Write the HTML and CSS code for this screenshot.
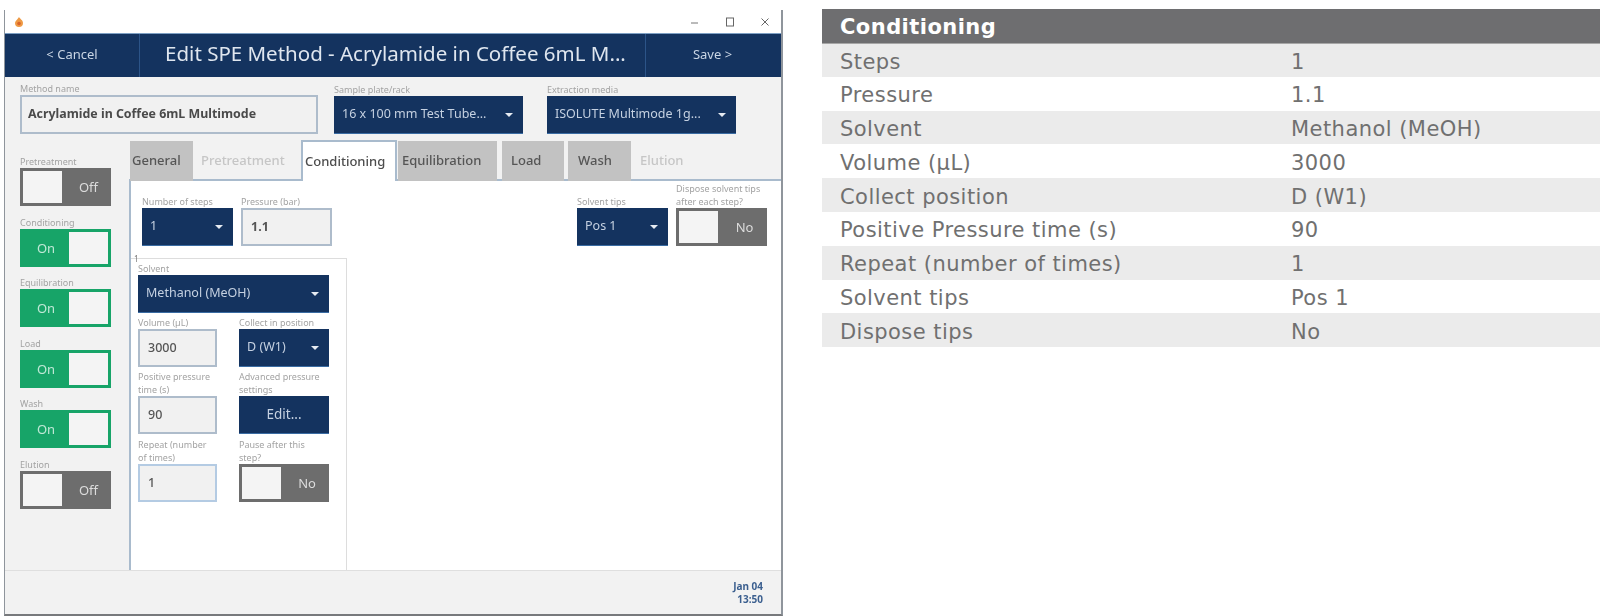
FILE: index.html
```html
<!DOCTYPE html>
<html lang="en">
<head>
<meta charset="utf-8">
<title>Edit SPE Method</title>
<link rel="stylesheet" href="styles.css">
</head>
<body>
<main class="page">
  <section class="window">
    <div class="titlebar">
      <svg class="app-icon" viewBox="0 0 12 12" width="12" height="12"><path d="M6 1 C7 3 10 4 10 7 A4 4 0 0 1 2 7 C2 5 4 4 6 1Z" fill="#ee9a45"/><circle cx="6" cy="7.5" r="1.8" fill="#d9642a"/></svg>
      <div class="controls">
        <svg viewBox="0 0 10 10" width="10" height="10"><path d="M1 6H8" stroke="#777" stroke-width="1"/></svg>
        <svg viewBox="0 0 10 10" width="10" height="10"><rect x="1.5" y="1" width="7" height="8" fill="none" stroke="#666" stroke-width="1"/></svg>
        <svg viewBox="0 0 10 10" width="10" height="10"><path d="M1.5 1.5L8.5 8.5M8.5 1.5L1.5 8.5" stroke="#666" stroke-width="1"/></svg>
      </div>
    </div>
    <header class="appbar">
      <div class="bar-btn left">&lt; Cancel</div>
      <h1 class="bar-title">Edit SPE Method - Acrylamide in Coffee 6mL M...</h1>
      <div class="bar-btn right">Save &gt;</div>
    </header>
    <div class="top-fields">
      <div class="field w-name"><label class="lbl">Method name</label><div class="input bold big">Acrylamide in Coffee 6mL Multimode</div></div>
      <div class="field w-plate"><label class="lbl">Sample plate/rack</label><div class="select">16 x 100 mm Test Tube...<i class="caret"></i></div></div>
      <div class="field w-plate"><label class="lbl">Extraction media</label><div class="select">ISOLUTE Multimode 1g...<i class="caret"></i></div></div>
    </div>
    <div class="main">
      <aside class="sidebar">
        <div class="field"><label class="lbl">Pretreatment</label><div class="toggle off"><span class="knob"></span><span class="tlabel">Off</span></div></div>
        <div class="field"><label class="lbl">Conditioning</label><div class="toggle on"><span class="tlabel">On</span><span class="knob"></span></div></div>
        <div class="field"><label class="lbl">Equilibration</label><div class="toggle on"><span class="tlabel">On</span><span class="knob"></span></div></div>
        <div class="field"><label class="lbl">Load</label><div class="toggle on"><span class="tlabel">On</span><span class="knob"></span></div></div>
        <div class="field"><label class="lbl">Wash</label><div class="toggle on"><span class="tlabel">On</span><span class="knob"></span></div></div>
        <div class="field"><label class="lbl">Elution</label><div class="toggle off"><span class="knob"></span><span class="tlabel">Off</span></div></div>
      </aside>
      <div class="tabarea">
        <nav class="tabs">
          <span class="tab gray t-general">General</span>
          <span class="tab dis t-pre">Pretreatment</span>
          <span class="tab active t-cond">Conditioning</span>
          <span class="tab gray t-equi">Equilibration</span>
          <span class="tab gray t-load">Load</span>
          <span class="tab gray t-wash">Wash</span>
          <span class="tab dis t-elu">Elution</span>
        </nav>
        <div class="panel">
          <div class="panel-top">
            <div class="field w-91"><label class="lbl">Number of steps</label><div class="select">1<i class="caret"></i></div></div>
            <div class="field w-91"><label class="lbl">Pressure (bar)</label><div class="input bold">1.1</div></div>
            <div class="field w-91 push"><label class="lbl">Solvent tips</label><div class="select">Pos 1<i class="caret"></i></div></div>
            <div class="field w-91"><label class="lbl">Dispose solvent tips after each step?</label><div class="toggle off"><span class="knob"></span><span class="tlabel">No</span></div></div>
          </div>
          <div class="step">
            <span class="step-no">1</span>
            <div class="field"><label class="lbl">Solvent</label><div class="select">Methanol (MeOH)<i class="caret"></i></div></div>
            <div class="step-grid">
              <div class="field"><label class="lbl">Volume (µL)</label><div class="input">3000</div></div>
              <div class="field"><label class="lbl">Collect in position</label><div class="select">D (W1)<i class="caret"></i></div></div>
              <div class="field"><label class="lbl">Positive pressure time (s)</label><div class="input">90</div></div>
              <div class="field"><label class="lbl">Advanced pressure settings</label><div class="select center">Edit...</div></div>
              <div class="field"><label class="lbl">Repeat (number of times)</label><div class="input focus">1</div></div>
              <div class="field"><label class="lbl">Pause after this step?</label><div class="toggle off"><span class="knob"></span><span class="tlabel">No</span></div></div>
            </div>
          </div>
        </div>
      </div>
    </div>
    <footer class="statusbar"><div class="clock">Jan 04<br>13:50</div></footer>
  </section>
  <table class="spec">
    <colgroup><col class="col-key"><col></colgroup>
    <thead><tr><th colspan="2">Conditioning</th></tr></thead>
    <tbody>
      <tr><td>Steps</td><td>1</td></tr>
      <tr><td>Pressure</td><td>1.1</td></tr>
      <tr><td>Solvent</td><td>Methanol (MeOH)</td></tr>
      <tr><td>Volume (µL)</td><td>3000</td></tr>
      <tr><td>Collect position</td><td>D (W1)</td></tr>
      <tr><td>Positive Pressure time (s)</td><td>90</td></tr>
      <tr><td>Repeat (number of times)</td><td>1</td></tr>
      <tr><td>Solvent tips</td><td>Pos 1</td></tr>
      <tr><td>Dispose tips</td><td>No</td></tr>
    </tbody>
  </table>
</main>
</body>
</html>
```
FILE: styles.css
```css
* { box-sizing: border-box; }
html, body { margin: 0; padding: 0; background: #fff; }
body { width: 1600px; height: 616px; overflow: hidden; }
.page { display: flex; align-items: flex-start; }

/* window */
.window {
  width: 779px; height: 606px; margin: 10px 0 0 4px;
  border-left: 1px solid #8f959c; border-right: 2px solid #8f959c; border-bottom: 2px solid #77797c;
  font-family: "Noto Sans", sans-serif; color: #444;
  display: flex; flex-direction: column; background: #f2f2f2;
  filter: blur(0.7px);
}
.titlebar { height: 23px; flex: none; background: #fff; display: flex; align-items: center; justify-content: space-between; padding: 0 11px 0 8px; }
.controls { display: flex; gap: 25px; }
.appbar { height: 44px; flex: none; background: #14335f; color: #dfe6ef; display: flex; align-items: center; border-top: 1px solid #7ea0c4; }
.bar-btn { font-size: 13px; text-align: center; flex: none; height: 100%; line-height: 40px; color: #c9d5e4; }
.bar-btn.left { width: 135px; border-right: 1px solid #2c5488; }
.bar-btn.right { width: 136px; border-left: 1px solid #2c5488; padding-right: 2px; }
.bar-title { flex: 1; min-width: 0; margin: 0; padding: 0 0 5px 6px; font-weight: 400; font-size: 20.5px; text-align: center; white-space: nowrap; }

.field { display: flex; flex-direction: column; justify-content: flex-end; }
.lbl { font-size: 9px; line-height: 13px; color: #a3a3a3; display: block; }
.top-fields { display: flex; height: 58px; flex: none; padding: 0 0 1px 15px; align-items: flex-end; }
.w-name { width: 298px; margin-right: 16px; }
.w-plate { width: 189px; margin-right: 24px; }

.input { height: 38px; background: #f1f1f1; border: 2px solid #aebccb; padding-left: 8px; line-height: 33px; font-size: 12.5px; font-weight: 500; color: #555; white-space: nowrap; }
.input.bold { font-weight: 700; }
.input.big { font-size: 12.4px; color: #4a4a4a; height: 39px; padding-left: 6px; }
.input.focus { border-color: #b4cbe3; }
.select { height: 38px; background: #14335f; color: #c5d1e1; font-size: 12.5px; line-height: 36px; padding-left: 8px; position: relative; white-space: nowrap; border-bottom: 1px solid #3a6ca3; }
.select.center { text-align: center; padding-left: 0; font-size: 13.5px; }
.caret { position: absolute; right: 10px; top: 17px; border: 4px solid transparent; border-top: 4px solid #e6ebf2; border-bottom: 0; width: 0; height: 0; }

.toggle { height: 38px; display: flex; align-items: stretch; border: 3px solid; padding: 0; font-size: 13px; }
.toggle.off { background: #6d6d6d; border-color: #6d6d6d; }
.toggle.on { background: #17a468; border-color: #17a468; }
.knob { width: 39px; background: #f4f4f4; flex: none; }
.tlabel { flex: 1; text-align: center; line-height: 32px; color: #dcdcdc; }
.toggle.off .tlabel { padding-left: 7px; }
.toggle.on .tlabel { color: #bfe8d6; }

.main { display: flex; flex: 1; min-height: 0; }
.sidebar { width: 124px; flex: none; padding: 20px 0 0 15px; display: flex; flex-direction: column; gap: 9.5px; }
.sidebar .field { width: 91px; }
.sidebar .lbl { height: 13px; }
.tabarea { flex: 1; display: flex; flex-direction: column; min-width: 0; padding-top: 5px; }
.tabs { height: 41px; flex: none; display: flex; font-size: 13px; font-weight: 500; padding-top: 1px; border-bottom: 2px solid #a9bbcd; }
.tab { text-align: left; line-height: 38px; white-space: nowrap; height: 40px; }
.tab.gray { background: #c2c2c2; color: #555; }
.tab.dis { color: #c6c6c6; }
.tab.active { background: #fff; border: 2px solid #a9bbcd; border-bottom: 0; color: #4d4d4d; height: 41px; margin-top: -1px; position: relative; z-index: 1; }
.t-general { width: 63px; margin-left: 1px; padding-left: 2px; }
.t-pre { width: 108px; padding-left: 8px; }
.t-cond { width: 96px; padding-left: 2px; }
.t-equi { width: 99px; margin-left: 1px; padding-left: 4px; }
.t-load { width: 62px; margin-left: 5px; padding-left: 9px; }
.t-wash { width: 63px; margin-left: 4px; padding-left: 10px; }
.t-elu { width: 63px; padding-left: 9px; }

.panel { flex: 1; background: #fff; border-left: 2px solid #a9bbcd; min-height: 0; display: flex; flex-direction: column; }
.panel-top { display: flex; height: 65px; flex: none; padding: 0 14px 0 11px; align-items: flex-end; gap: 8px; }
.push { margin-left: auto; }
.w-91 { width: 91px; }
.step { position: relative; flex: 1; width: 216px; margin-top: 12px; border-top: 1px solid #ddd; border-right: 1px solid #ddd; padding: 3px 0 0 7px; }
.step-no { position: absolute; left: 3px; top: -5px; font-size: 8px; color: #777; line-height: 10px; }
.step > .field { width: 191px; }
.step-grid { display: grid; grid-template-columns: 79px 90px; column-gap: 22px; grid-template-rows: 54px 67px 68px; width: 191px; }

.statusbar { height: 44px; flex: none; background: #f2f2f2; border-top: 1px solid #dfdfdf; display: flex; justify-content: flex-end; padding: 9px 18px 0 0; }
.clock { font-size: 10px; line-height: 13px; font-weight: 700; color: #3b5f8f; text-align: right; }

/* spec table */
.spec { width: 778px; margin: 9px 0 0 39px; border-collapse: collapse; table-layout: fixed; font-family: "DejaVu Sans", sans-serif; font-size: 21px; letter-spacing: 0.45px; color: #707070; flex: none; }
.col-key { width: 451px; }
.spec th { height: 34px; background: #6e6e70; color: #fff; text-align: left; font-weight: 700; padding: 3px 0 0 18px; border-bottom: 1px solid #a6a6a6; }
.spec td { height: 33.8px; padding: 3px 0 0 18px; white-space: nowrap; }
.spec tbody tr:nth-child(odd) { background: #ebebeb; }
```
